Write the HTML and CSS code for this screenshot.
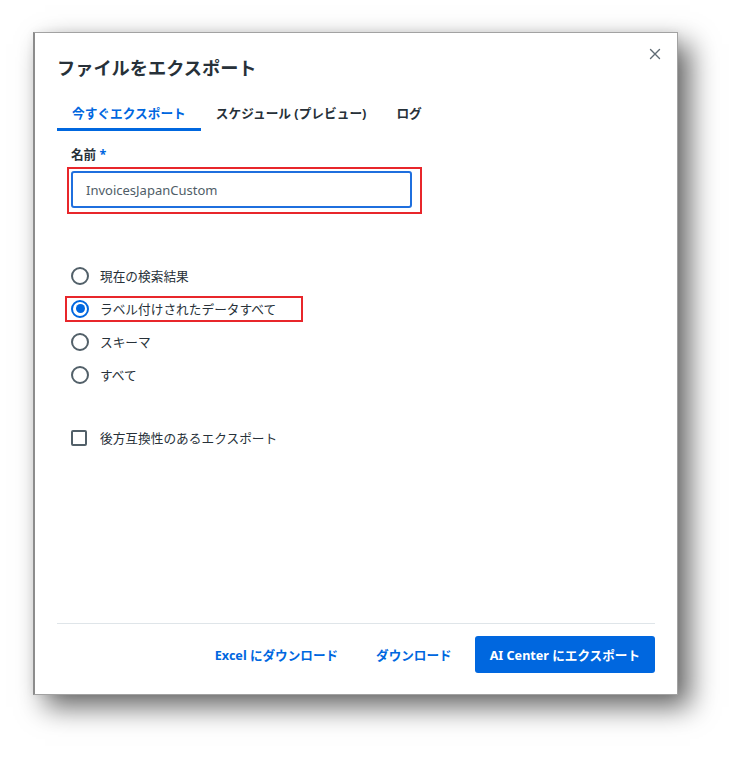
FILE: index.html
```html
<!DOCTYPE html>
<html lang="ja">
<head>
<meta charset="utf-8">
<title>ファイルをエクスポート</title>
<link rel="stylesheet" href="styles.css">
</head>
<body>
<div class="frame">
  <div class="header">
    <h1 class="title">ファイルをエクスポート</h1>
    <button class="close" aria-label="閉じる">
      <svg width="12" height="12" viewBox="0 0 12 12"><path d="M1.5 1.5 L10.5 10.5 M10.5 1.5 L1.5 10.5" stroke="#5f6b74" stroke-width="1.4" stroke-linecap="round" fill="none"/></svg>
    </button>
  </div>
  <div class="tabs">
    <div class="tab active">今すぐエクスポート</div>
    <div class="tab">スケジュール (プレビュー)</div>
    <div class="tab">ログ</div>
  </div>
  <div class="form">
    <div class="label">名前 <span class="req">*</span></div>
    <div class="field">
      <div class="input">InvoicesJapanCustom</div>
      <div class="mark mark-input"></div>
    </div>
    <div class="radios">
      <div class="row"><span class="radio"></span><span class="text">現在の検索結果</span></div>
      <div class="row"><span class="radio checked"></span><span class="text">ラベル付けされたデータすべて</span><div class="mark mark-radio"></div></div>
      <div class="row"><span class="radio"></span><span class="text">スキーマ</span></div>
      <div class="row"><span class="radio"></span><span class="text">すべて</span></div>
    </div>
    <div class="row check-row"><span class="checkbox"></span><span class="text">後方互換性のあるエクスポート</span></div>
  </div>
  <div class="footer">
    <div class="sep"></div>
    <div class="actions">
      <button class="btn text-btn">Excel にダウンロード</button>
      <button class="btn text-btn">ダウンロード</button>
      <button class="btn primary">AI Center にエクスポート</button>
    </div>
  </div>
</div>
</body>
</html>
```
FILE: styles.css
```css
* { box-sizing: border-box; }
html, body { height: 100%; }
body {
  margin: 0;
  padding: 32px 0 0 33px;
  min-height: 762px;
  background: #ffffff;
  font-family: "Noto Sans", "Noto Sans CJK JP", sans-serif;
  color: #273139;
}
.frame {
  width: 645px;
  height: 663px;
  background: #ffffff;
  border: 1px solid #a2a2a2;
  border-left: 2px solid #8c8c8c;
  box-shadow: 12px 12px 26px rgba(0, 0, 0, 0.6), 0 0 8px rgba(0, 0, 0, 0.06);
  display: flex;
  flex-direction: column;
  padding: 15px 22px 21px 22px;
}
.header {
  display: flex;
  justify-content: space-between;
  align-items: flex-start;
}
.title {
  margin: 7px 0 0 0;
  font-size: 18.2px;
  line-height: 26px;
  font-weight: 600;
  color: #273139;
}
.close {
  width: 12px;
  height: 12px;
  padding: 0;
  margin: 0 -6px 0 0;
  border: 0;
  background: none;
  display: flex;
}
.tabs {
  display: flex;
  margin-top: 14px;
}
.tab {
  padding: 9px 15px 6px 15px;
  font-size: 12.7px;
  line-height: 18px;
  font-weight: 700;
  color: #273139;
  border-bottom: 3px solid transparent;
}
.tab.active {
  color: #0067df;
  border-bottom-color: #0067df;
}
.form {
  padding-left: 14px;
  margin-top: 15px;
}
.label {
  font-size: 12.6px;
  line-height: 18px;
  font-weight: 700;
}
.req { color: #0067df; }
.field {
  position: relative;
  width: 341px;
  margin-top: 7px;
}
.input {
  height: 37px;
  border: 2px solid #1f6fde;
  border-radius: 3px;
  padding-left: 13px;
  display: flex;
  align-items: center;
  font-size: 13px;
  color: #4f5d67;
}
.mark {
  position: absolute;
  border: 2px solid #e8262b;
  pointer-events: none;
}
.mark-input {
  left: -4px;
  top: -4px;
  right: -10px;
  bottom: -6px;
}
.radios { margin-top: 51px; }
.row {
  position: relative;
  height: 33px;
  display: flex;
  align-items: center;
}
.text {
  font-size: 12.7px;
  color: #273139;
}
.radio {
  width: 18px;
  height: 18px;
  border: 2px solid #526069;
  border-radius: 50%;
  margin-right: 11px;
  display: flex;
  align-items: center;
  justify-content: center;
}
.radio.checked { border-color: #0067df; }
.radio.checked::after {
  content: "";
  width: 9px;
  height: 9px;
  border-radius: 50%;
  background: #0067df;
}
.mark-radio {
  left: -6px;
  top: 4px;
  bottom: 3px;
  width: 238px;
}
.check-row { margin-top: 30px; }
.checkbox {
  width: 16px;
  height: 16px;
  border: 2px solid #526069;
  border-radius: 2px;
  margin-right: 13px;
}
.footer {
  margin-top: auto;
}
.sep {
  height: 1px;
  background: #dfe5e9;
}
.actions {
  margin-top: 12px;
  display: flex;
  justify-content: flex-end;
  gap: 8px;
}
.btn {
  height: 37px;
  padding: 0 15px;
  border: 0;
  border-radius: 3px;
  font-family: "Noto Sans", "Noto Sans CJK JP", sans-serif;
  font-size: 12.6px;
  font-weight: 700;
  background: none;
}
.text-btn { color: #0067df; }
.primary {
  background: #0067df;
  color: #ffffff;
}
```
